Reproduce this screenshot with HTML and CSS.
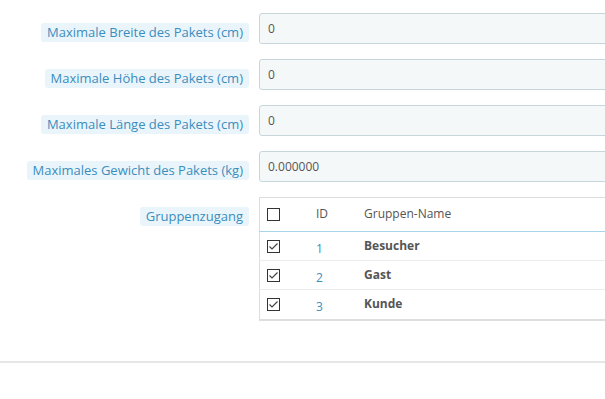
FILE: index.html
```html
<!DOCTYPE html>
<html lang="de">

<head>
    <meta charset="UTF-8">
    <title>Versanddienst - Pakete</title>
    <meta name="viewport" content="width=device-width, initial-scale=1">
    <link rel="stylesheet" href="styles.css">
</head>

<body>
    <form class="form" onsubmit="return false;">
        <div class="form-group">
            <div class="label-col"><span class="label-tooltip">Maximale Breite des Pakets (cm)</span></div>
            <div class="field"><input type="text" class="input" value="0"></div>
        </div>
        <div class="form-group">
            <div class="label-col"><span class="label-tooltip">Maximale Höhe des Pakets (cm)</span></div>
            <div class="field"><input type="text" class="input" value="0"></div>
        </div>
        <div class="form-group">
            <div class="label-col"><span class="label-tooltip">Maximale Länge des Pakets (cm)</span></div>
            <div class="field"><input type="text" class="input" value="0"></div>
        </div>
        <div class="form-group">
            <div class="label-col"><span class="label-tooltip">Maximales Gewicht des Pakets (kg)</span></div>
            <div class="field"><input type="text" class="input" value="0.000000"></div>
        </div>
        <div class="form-group">
            <div class="label-col"><span class="label-tooltip">Gruppenzugang</span></div>
            <div class="field">
                <table class="groups">
                    <thead>
                        <tr>
                            <th class="col-check"><span class="check"></span></th>
                            <th class="col-id">ID</th>
                            <th>Gruppen-Name</th>
                        </tr>
                    </thead>
                    <tbody>
                        <tr>
                            <td class="col-check"><span class="check"><svg width="11" height="11" viewBox="0 0 11 11"><path d="M1.5 5.5 L4 8 L9.5 2.5" fill="none" stroke="#444" stroke-width="1.2"/></svg></span></td>
                            <td class="col-id">1</td>
                            <td class="name">Besucher</td>
                        </tr>
                        <tr>
                            <td class="col-check"><span class="check"><svg width="11" height="11" viewBox="0 0 11 11"><path d="M1.5 5.5 L4 8 L9.5 2.5" fill="none" stroke="#444" stroke-width="1.2"/></svg></span></td>
                            <td class="col-id">2</td>
                            <td class="name">Gast</td>
                        </tr>
                        <tr>
                            <td class="col-check"><span class="check"><svg width="11" height="11" viewBox="0 0 11 11"><path d="M1.5 5.5 L4 8 L9.5 2.5" fill="none" stroke="#444" stroke-width="1.2"/></svg></span></td>
                            <td class="col-id">3</td>
                            <td class="name">Kunde</td>
                        </tr>
                    </tbody>
                </table>
            </div>
        </div>
        <div class="panel-footer"></div>
    </form>
</body>

</html>
```

FILE: styles.css
```css
body {
    margin: 0;
    background-color: #ffffff;
    font-family: "Open Sans", "DejaVu Sans", sans-serif;
    color: #555555;
    overflow: hidden;
}

.form {
    padding-top: 13px;
    width: 800px;
}

.form-group {
    display: flex;
    margin-bottom: 15px;
}

.label-col {
    flex-shrink: 0;
    width: 249px;
    padding-top: 7px;
    text-align: right;
}

.label-tooltip {
    display: inline-block;
    background-color: #eaf5fb;
    color: #3b8dbd;
    font-size: 13px;
    line-height: 19px;
    padding: 0 6px;
    border-radius: 3px;
}

.field {
    margin-left: 10px;
    width: 480px;
}

.input {
    box-sizing: border-box;
    display: block;
    width: 100%;
    height: 31px;
    padding: 0 8px;
    font-family: inherit;
    font-size: 12px;
    color: #555555;
    background-color: #f5f8f9;
    border: 1px solid #c7d6db;
    border-radius: 3px;
}

.groups {
    width: 100%;
    border-collapse: collapse;
    border: 1px solid #dddddd;
    border-bottom: 2px solid #dedede;
    font-size: 12px;
    line-height: 16px;
}

.groups th {
    padding: 8px 8px 9px;
    text-align: left;
    font-weight: normal;
    color: #555555;
    border-bottom: 1px solid #a8d4ec;
}

.groups td {
    padding: 6px 8px;
    border-bottom: 1px solid #eaedef;
    vertical-align: middle;
}

.groups tbody tr:last-child td {
    padding-bottom: 7px;
    border-bottom: none;
}

.groups .col-check {
    width: 33px;
    padding-left: 7px;
}

.groups .col-id {
    width: 32px;
}

.groups td.col-id {
    color: #3b8dbd;
    padding-top: 9px;
    padding-bottom: 3px;
}

.groups tbody tr:last-child td.col-id {
    padding-bottom: 4px;
}

.groups .name {
    font-weight: bold;
    color: #555555;
}

.check {
    box-sizing: border-box;
    display: block;
    width: 13px;
    height: 13px;
    border: 1px solid #333333;
    background-color: #ffffff;
}

.check svg {
    display: block;
}

.panel-footer {
    margin-top: 40px;
    border-top: 2px solid #e6e6e6;
}
```
